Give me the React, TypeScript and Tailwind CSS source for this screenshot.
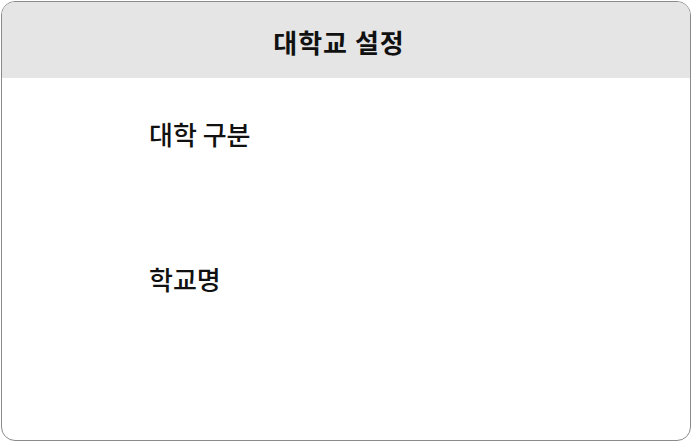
import React from "react";

const font = { fontFamily: '"Noto Sans CJK KR", "Noto Sans", sans-serif' };

const FieldLabel: React.FC<{ label: string }> = ({ label }) => (
  <div className="h-[145px] flex items-start">
    <span className="text-[26px] leading-[30px] font-medium text-[#111]">{label}</span>
  </div>
);

export default function App() {
  return (
    <div className="w-[692px] h-[442px] bg-white p-px" style={font}>
      <div className="w-full h-full rounded-[14px] border border-[#8a8a8a] overflow-hidden bg-white flex flex-col">
        <div className="h-[76px] shrink-0 bg-[#e5e5e5] flex items-center justify-center pr-[14px] pt-[3px]">
          <h1 className="text-[26px] font-bold text-[#111] tracking-[1px]">대학교 설정</h1>
        </div>
        <div className="pl-[147px] pt-[41px] flex flex-col">
          <FieldLabel label="대학 구분" />
          <FieldLabel label="학교명" />
        </div>
      </div>
    </div>
  );
}
